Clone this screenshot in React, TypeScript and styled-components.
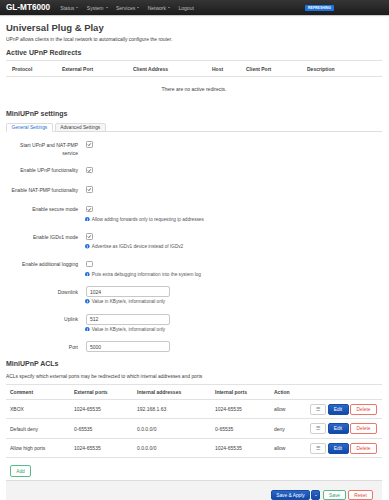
import React from "react";
import styled, { createGlobalStyle } from "styled-components";

const GlobalStyle = createGlobalStyle`
  html, body { margin: 0; padding: 0; background: #fff; }
  body { font-family: "Liberation Sans", Arial, sans-serif; color: #404040; }
  * { box-sizing: border-box; }
`;

const NavBar = styled.header`
  height: 15px;
  display: flex;
  align-items: center;
  padding: 0 55px 0 6px;
  background: linear-gradient(to bottom, #353535 0%, #1c1c1c 100%);
  box-shadow: 0 1px 1px rgba(0, 0, 0, 0.2);
`;

const Brand = styled.span`
  font-size: 8.2px;
  font-weight: bold;
  color: #fff;
  line-height: 15px;
  margin-right: 10px;
`;

const NavItem = styled.span`
  display: inline-flex;
  align-items: center;
  font-size: 5px;
  color: #bdbdbd;
  margin-right: 8.5px;
`;

const Caret = styled.span`
  display: inline-block;
  width: 0;
  height: 0;
  margin-left: 2px;
  border-left: 1.5px solid transparent;
  border-right: 1.5px solid transparent;
  border-top: 1.5px solid #bdbdbd;
`;

const Spacer = styled.div`
  flex: 1;
`;

const Badge = styled.span`
  height: 6px;
  line-height: 6px;
  padding: 0 3px;
  border-radius: 1px;
  background: #1b74e0;
  color: #fff;
  font-size: 3.5px;
  font-weight: bold;
`;

const Main = styled.main`
  padding: 7px 7px 0 6px;
`;

const Title = styled.h2`
  margin: 0;
  font-size: 9.5px;
  line-height: 12px;
  font-weight: bold;
`;

const Lead = styled.p<{ $top?: number }>`
  margin: ${(p) => p.$top ?? 2}px 0 0;
  font-size: 4.9px;
  line-height: 8px;
`;

const SectionTitle = styled.h3<{ $top: number }>`
  margin: ${(p) => p.$top}px 0 0;
  font-size: 7px;
  line-height: 9px;
  font-weight: bold;
`;

const Table = styled.div<{ $top: number }>`
  margin-top: ${(p) => p.$top}px;
  border-top: 1px solid #e2e2e2;
`;

const TRow = styled.div<{ $cols: string; $h: number; $pad: number; $line?: boolean }>`
  display: grid;
  grid-template-columns: ${(p) => p.$cols};
  height: ${(p) => p.$h}px;
  align-items: center;
  border-bottom: ${(p) => (p.$line ? "1px solid #e2e2e2" : "none")};
  font-size: 5px;

  & > * {
    padding-left: ${(p) => p.$pad}px;
  }
`;

const Th = styled.span`
  font-weight: bold;
`;

const Td = styled.span``;

const Empty = styled.div`
  height: 24px;
  display: flex;
  align-items: center;
  justify-content: center;
  font-size: 5px;
`;

const Tabs = styled.div`
  display: flex;
  gap: 2px;
  margin-top: 5.5px;
  border-bottom: 1px solid #dedede;
`;

const Tab = styled.span<{ $active?: boolean }>`
  height: 9px;
  line-height: 8px;
  padding: 0 4.5px;
  font-size: 4.8px;
  border: 1px solid #dcdcdc;
  border-bottom-color: ${(p) => (p.$active ? "#fff" : "#dcdcdc")};
  border-radius: 2px 2px 0 0;
  margin-bottom: -1px;
  background: ${(p) => (p.$active ? "#fff" : "#f6f6f6")};
  color: ${(p) => (p.$active ? "#1f6fd0" : "#404040")};
`;

const Form = styled.div`
  margin-top: 2.75px;
`;

const FormRow = styled.div`
  display: grid;
  grid-template-columns: 72px 1fr;
  column-gap: 8px;
  padding: 3.75px 0;
`;

const Label = styled.span`
  text-align: right;
  font-size: 5px;
  line-height: 8px;
  padding-top: 2px;
`;

const Field = styled.div`
  display: flex;
  flex-direction: column;
`;

const ControlLine = styled.div`
  height: 12px;
  display: flex;
  align-items: center;
`;

const Box = styled.span`
  width: 6.5px;
  height: 6.5px;
  border: 1px solid #a9a9a9;
  border-radius: 1.2px;
  background: #fff;
  display: flex;
  align-items: center;
  justify-content: center;
`;

const TextInput = styled.input`
  width: 84px;
  height: 11px;
  padding: 0 3px;
  border: 1px solid #c8c8c8;
  border-radius: 2px;
  font-family: inherit;
  font-size: 5px;
  color: #404040;
  outline: none;
`;

const Desc = styled.div`
  display: flex;
  align-items: center;
  gap: 2.2px;
  height: 8px;
  font-size: 4.7px;
  color: #555;
  margin-left: -1px;
`;

const Actions = styled.div`
  display: flex;
  justify-content: flex-end;
  gap: 1.5px;
  padding-right: 5px;
`;

type Variant = "primary" | "neutral" | "remove" | "save";

const colors: Record<Variant, { bg: string; border: string; fg: string }> = {
  primary: { bg: "linear-gradient(to bottom, #2b66c8, #1149a6)", border: "#164ea8", fg: "#fff" },
  neutral: { bg: "#fff", border: "#cfcfcf", fg: "#777" },
  remove: { bg: "#fff", border: "#e9776a", fg: "#e2463a" },
  save: { bg: "#fff", border: "#59bb8a", fg: "#35a067" },
};

const Btn = styled.span<{ $v: Variant; $w: number; $h?: number }>`
  display: inline-flex;
  align-items: center;
  justify-content: center;
  width: ${(p) => p.$w}px;
  height: ${(p) => p.$h ?? 11}px;
  border: 1px solid ${(p) => colors[p.$v].border};
  border-radius: 2px;
  background: ${(p) => colors[p.$v].bg};
  color: ${(p) => colors[p.$v].fg};
  font-size: 4.8px;
`;

const AddWrap = styled.div`
  display: flex;
  margin: 7px 0 0 4px;
`;

const Footer = styled.div`
  margin-top: 3px;
  height: 30px;
  display: flex;
  justify-content: flex-end;
  align-items: flex-start;
  gap: 2px;
  padding: 8.5px 9px 0 0;
  background: #f3f3f3;
  border-top: 1px solid #dcdcdc;
`;

const Split = styled.div`
  display: flex;
  gap: 1px;
  margin-right: 1px;
`;

const DownCaret = styled.span`
  width: 0;
  height: 0;
  border-left: 1.4px solid transparent;
  border-right: 1.4px solid transparent;
  border-top: 1.4px solid #fff;
`;

const InfoIcon = () => (
  <svg width="4.6" height="4.6" viewBox="0 0 10 10">
    <circle cx="5" cy="5" r="5" fill="#1e6fd9" />
    <rect x="4.2" y="4.2" width="1.6" height="3.8" fill="#fff" />
    <circle cx="5" cy="2.7" r="0.9" fill="#fff" />
  </svg>
);

const Check = ({ on }: { on: boolean }) => (
  <Box>
    {on && (
      <svg width="5" height="5" viewBox="0 0 10 10">
        <path d="M2 5.2 L4.2 7.4 L8.2 2.6" stroke="#333" strokeWidth="1.8" fill="none" />
      </svg>
    )}
  </Box>
);

const menu = ["Status", "System", "Services", "Network"];

const redirectCols = "50px 71px 79px 34px 61px 1fr";
const aclCols = "64px 63px 78px 59px 36px 1fr";

type Setting = {
  label: string[];
  kind: "check" | "input";
  on?: boolean;
  value?: string;
  desc?: string;
};

const settings: Setting[] = [
  { label: ["Start UPnP and NAT-PMP", "service"], kind: "check", on: true },
  { label: ["Enable UPnP functionality"], kind: "check", on: true },
  { label: ["Enable NAT-PMP functionality"], kind: "check", on: true },
  { label: ["Enable secure mode"], kind: "check", on: true, desc: "Allow adding forwards only to requesting ip addresses" },
  { label: ["Enable IGDv1 mode"], kind: "check", on: true, desc: "Advertise as IGDv1 device instead of IGDv2" },
  { label: ["Enable additional logging"], kind: "check", on: false, desc: "Puts extra debugging information into the system log" },
  { label: ["Downlink"], kind: "input", value: "1024", desc: "Value in KByte/s, informational only" },
  { label: ["Uplink"], kind: "input", value: "512", desc: "Value in KByte/s, informational only" },
  { label: ["Port"], kind: "input", value: "5000" },
];

const acls = [
  ["XBOX", "1024-65535", "192.168.1.63", "1024-65535", "allow"],
  ["Default deny", "0-65535", "0.0.0.0/0", "0-65535", "deny"],
  ["Allow high ports", "1024-65535", "0.0.0.0/0", "1024-65535", "allow"],
];

export default function App() {
  return (
    <>
      <GlobalStyle />
      <NavBar>
        <Brand>GL-MT6000</Brand>
        {menu.map((m) => (
          <NavItem key={m}>
            {m}
            <Caret />
          </NavItem>
        ))}
        <NavItem>Logout</NavItem>
        <Spacer />
        <Badge>REFRESHING</Badge>
      </NavBar>

      <Main>
        <Title>Universal Plug &amp; Play</Title>
        <Lead>UPnP allows clients in the local network to automatically configure the router.</Lead>

        <SectionTitle $top={4}>Active UPnP Redirects</SectionTitle>
        <Table $top={3}>
          <TRow $cols={redirectCols} $h={16} $pad={6} $line>
            <Th>Protocol</Th>
            <Th>External Port</Th>
            <Th>Client Address</Th>
            <Th>Host</Th>
            <Th>Client Port</Th>
            <Th>Description</Th>
          </TRow>
          <Empty>There are no active redirects.</Empty>
        </Table>

        <SectionTitle $top={7.5}>MiniUPnP settings</SectionTitle>
        <Tabs>
          <Tab $active>General Settings</Tab>
          <Tab>Advanced Settings</Tab>
        </Tabs>

        <Form>
          {settings.map((s) => (
            <FormRow key={s.label.join(" ")}>
              <Label>
                {s.label.map((l) => (
                  <div key={l}>{l}</div>
                ))}
              </Label>
              <Field>
                <ControlLine>
                  {s.kind === "check" ? (
                    <Check on={!!s.on} />
                  ) : (
                    <TextInput defaultValue={s.value} readOnly />
                  )}
                </ControlLine>
                {s.desc && (
                  <Desc>
                    <InfoIcon />
                    {s.desc}
                  </Desc>
                )}
              </Field>
            </FormRow>
          ))}
        </Form>

        <SectionTitle $top={3}>MiniUPnP ACLs</SectionTitle>
        <Lead $top={4.5}>ACLs specify which external ports may be redirected to which internal addresses and ports</Lead>
        <Table $top={3}>
          <TRow $cols={aclCols} $h={15} $pad={4} $line>
            <Th>Comment</Th>
            <Th>External ports</Th>
            <Th>Internal addresses</Th>
            <Th>Internal ports</Th>
            <Th>Action</Th>
            <span />
          </TRow>
          {acls.map((r) => (
            <TRow key={r[0]} $cols={aclCols} $h={19.5} $pad={4} $line>
              {r.map((c, i) => (
                <Td key={i}>{c}</Td>
              ))}
              <Actions>
                <Btn $v="neutral" $w={16}>☰</Btn>
                <Btn $v="primary" $w={21}>Edit</Btn>
                <Btn $v="remove" $w={27}>Delete</Btn>
              </Actions>
            </TRow>
          ))}
        </Table>

        <AddWrap>
          <Btn $v="save" $w={21} $h={12}>Add</Btn>
        </AddWrap>

        <Footer>
          <Split>
            <Btn $v="primary" $w={39} $h={10.5}>Save &amp; Apply</Btn>
            <Btn $v="primary" $w={9} $h={10.5}>
              <DownCaret />
            </Btn>
          </Split>
          <Btn $v="save" $w={23} $h={10.5}>Save</Btn>
          <Btn $v="remove" $w={25} $h={10.5}>Reset</Btn>
        </Footer>
      </Main>
    </>
  );
}
